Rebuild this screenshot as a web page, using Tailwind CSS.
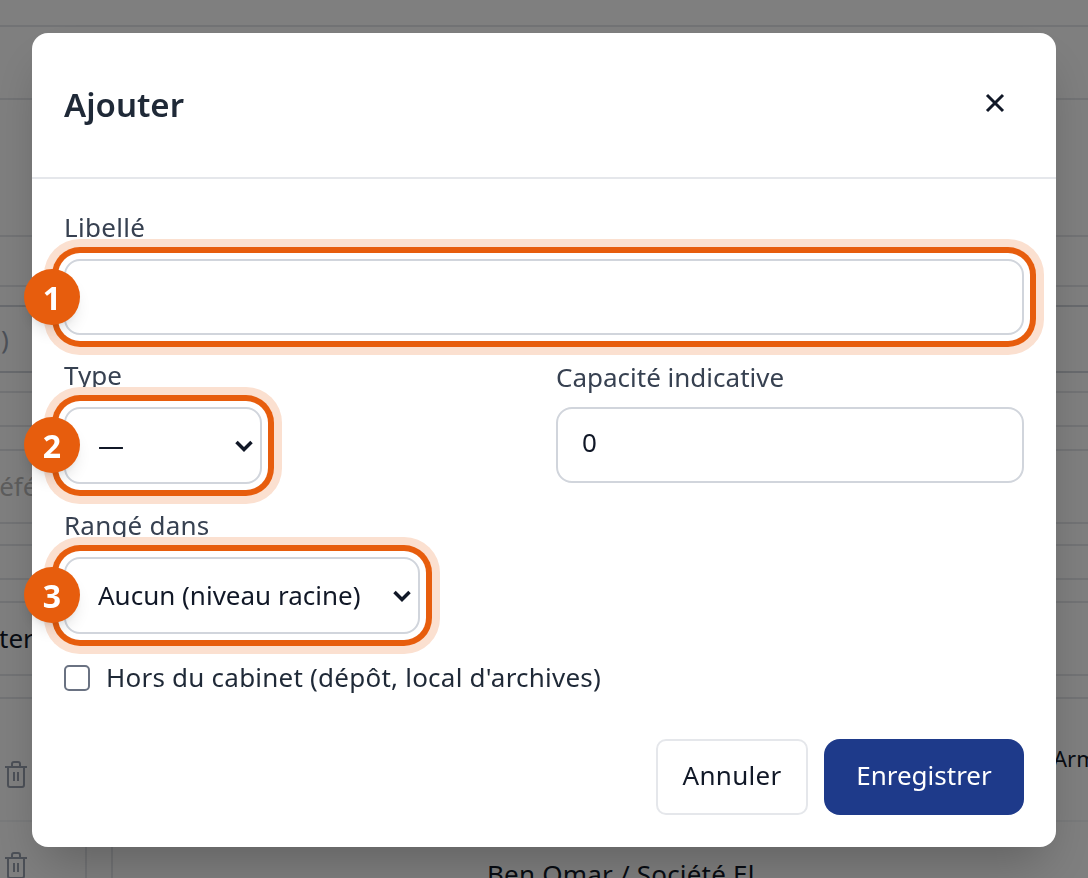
<!DOCTYPE html>
<html lang="fr">
<head>
<meta charset="UTF-8" />
<title>Ajouter</title>
<script src="https://cdn.jsdelivr.net/npm/@tailwindcss/browser@4"></script>
</head>
<body class="h-[878px] overflow-hidden bg-white font-['Noto_Sans',sans-serif] text-[26px] leading-[39px] text-[#111827]">

  <!-- page behind the dialog -->
  <div class="flex h-[878px] flex-col overflow-hidden">
    <div class="h-[27px] shrink-0 border-b-2 border-gray-200"></div>
    <div class="h-[73px] shrink-0 border-b-2 border-gray-200"></div>
    <div class="h-[137px] shrink-0 border-b-2 border-gray-200"></div>
    <div class="h-[50px] shrink-0 border-b-2 border-gray-200"></div>
    <div class="h-[20px] shrink-0 border-b-2 border-gray-300"></div>
    <div class="flex h-[66px] shrink-0 items-center border-b-2 border-gray-300 pl-[1px] text-gray-400">)</div>
    <div class="h-[20px] shrink-0 border-b-2 border-gray-200"></div>
    <div class="h-[34px] shrink-0 border-b-2 border-gray-200"></div>
    <div class="h-[24px] shrink-0 border-b-2 border-gray-200"></div>
    <div class="flex h-[73px] shrink-0 items-center border-b-2 border-gray-200 text-[#bbbbbb]"><span class="ml-[-17px] whitespace-nowrap">Référence</span></div>
    <div class="h-[22px] shrink-0 border-b-2 border-gray-200"></div>
    <div class="h-[34px] shrink-0 border-b-2 border-gray-200"></div>
    <div class="h-[23px] shrink-0 border-b-2 border-gray-200"></div>
    <div class="flex h-[73px] shrink-0 items-center border-b-2 border-gray-200"><span class="ml-[-1px]">ter</span></div>
    <div class="h-[23px] shrink-0 border-b-2 border-gray-200"></div>
    <div class="flex h-[123px] shrink-0 items-center justify-between border-b-2 border-gray-100 pl-[4px]">
      <svg class="mt-[30px] h-[27px] w-[24px] text-gray-400" viewBox="0 0 24 27" fill="none" stroke="currentColor" stroke-width="2"><path d="M1 6h22M8 6V3a2 2 0 0 1 2-2h4a2 2 0 0 1 2 2v3M4 6v18a2 2 0 0 0 2 2h12a2 2 0 0 0 2-2V6M10 11v9M14 11v9"/></svg>
      <span class="mb-[2px] w-[35px] overflow-hidden whitespace-nowrap text-[22px]">Armand</span>
    </div>
    <div class="flex h-[60px] shrink-0">
      <div class="w-[87px] shrink-0 border-r-2 border-gray-200 pl-[4px] pt-[30px]">
        <svg class="h-[27px] w-[24px] text-gray-400" viewBox="0 0 24 27" fill="none" stroke="currentColor" stroke-width="2"><path d="M1 6h22M8 6V3a2 2 0 0 1 2-2h4a2 2 0 0 1 2 2v3M4 6v18a2 2 0 0 0 2 2h12a2 2 0 0 0 2-2V6M10 11v9M14 11v9"/></svg>
      </div>
      <div class="w-[26px] shrink-0 border-r-2 border-gray-200"></div>
      <div class="pl-[374px] pt-[33px] whitespace-nowrap tracking-[0.2px]">Ben Omar / Société El</div>
    </div>
  </div>

  <!-- dialog -->
  <div class="fixed inset-0 bg-black/50">
    <div class="mx-[32px] mt-[33px] h-[814px] rounded-[16px] bg-white shadow-2xl">
      <div class="flex h-[146px] items-center justify-between border-b-2 border-gray-200 pb-[4px] pl-[32px] pr-[49px]">
        <h2 class="mt-[2px] text-[33px] font-semibold text-[#1f2937]">Ajouter</h2>
        <svg class="h-[24px] w-[24px] text-[#111827]" viewBox="0 0 24 24" fill="none" stroke="currentColor" stroke-width="3"><path d="M4 4l16 16M20 4L4 20"/></svg>
      </div>

      <div class="px-[32px] pt-[32px]">
        <label class="block h-[48px] leading-[33px] tracking-[0.3px] text-[#374151]">Libellé</label>
        <div class="relative">
          <input type="text" class="relative z-10 block h-[76px] w-full rounded-[16px] border-2 border-gray-300 bg-white shadow-[0_0_0_6px_#fff,0_0_0_12px_#e75d0d,0_0_0_20px_#fbe0d0]" />
          <span class="absolute left-[-40px] top-[10px] z-20 flex h-[56px] w-[56px] items-center justify-center rounded-full bg-[#e75d0d] text-[32px] font-bold text-white shadow-lg">1</span>
        </div>

        <div class="mt-[24px] flex gap-[32px]">
          <div class="w-[460px]">
            <label class="block h-[48px] leading-[33px] text-[#374151]">Type</label>
            <div class="relative w-[198px]">
              <select class="relative z-10 h-[77px] w-full appearance-none rounded-[16px] border-2 border-gray-300 bg-white pl-[32px] shadow-[0_0_0_6px_#fff,0_0_0_12px_#e75d0d,0_0_0_20px_#fbe0d0]"><option>—</option></select>
              <svg class="absolute right-[8px] top-[29px] z-20 h-[20px] w-[20px] text-[#111827]" viewBox="0 0 20 20" fill="none" stroke="currentColor" stroke-width="3.5"><path d="M2.5 6l7.5 7.5L17.500 6"/></svg>
              <span class="absolute left-[-40px] top-[10px] z-20 flex h-[56px] w-[56px] items-center justify-center rounded-full bg-[#e75d0d] text-[32px] font-bold text-white shadow-lg">2</span>
            </div>
          </div>
          <div class="flex-1">
            <label class="block h-[48px] leading-[36px] text-[#374151]">Capacité indicative</label>
            <input type="text" value="0" class="block h-[76px] w-full rounded-[16px] border-2 border-gray-300 bg-white px-[24px] pb-[6px]" />
          </div>
        </div>

        <label class="mt-[25px] block h-[48px] leading-[33px] tracking-[0.2px] text-[#374151]">Rangé dans</label>
        <div class="relative w-[356px]">
          <select class="relative z-10 h-[77px] w-full appearance-none rounded-[16px] border-2 border-gray-300 bg-white pl-[32px] shadow-[0_0_0_6px_#fff,0_0_0_12px_#e75d0d,0_0_0_20px_#fbe0d0]"><option>Aucun (niveau racine)</option></select>
          <svg class="absolute right-[8px] top-[29px] z-20 h-[20px] w-[20px] text-[#111827]" viewBox="0 0 20 20" fill="none" stroke="currentColor" stroke-width="3.5"><path d="M2.5 6l7.5 7.5L17.500 6"/></svg>
          <span class="absolute left-[-40px] top-[10px] z-20 flex h-[56px] w-[56px] items-center justify-center rounded-full bg-[#e75d0d] text-[32px] font-bold text-white shadow-lg">3</span>
        </div>

        <label class="mt-[24px] flex items-center gap-[16px] tracking-[0.23px] text-[#1f2937]">
          <span class="h-[26px] w-[26px] rounded-[5px] border-2 border-gray-500 bg-white"></span>
          Hors du cabinet (dépôt, local d'archives)
        </label>

        <div class="mt-[42px] flex justify-end gap-[16px]">
          <button class="h-[76px] w-[152px] rounded-[10px] border-2 border-gray-200 bg-white pb-[4px] tracking-[0.3px] text-[#111827]">Annuler</button>
          <button class="h-[76px] w-[200px] rounded-[16px] bg-[#1e3a8a] pb-[4px] text-white">Enregistrer</button>
        </div>
      </div>
    </div>
  </div>
</body>
</html>
